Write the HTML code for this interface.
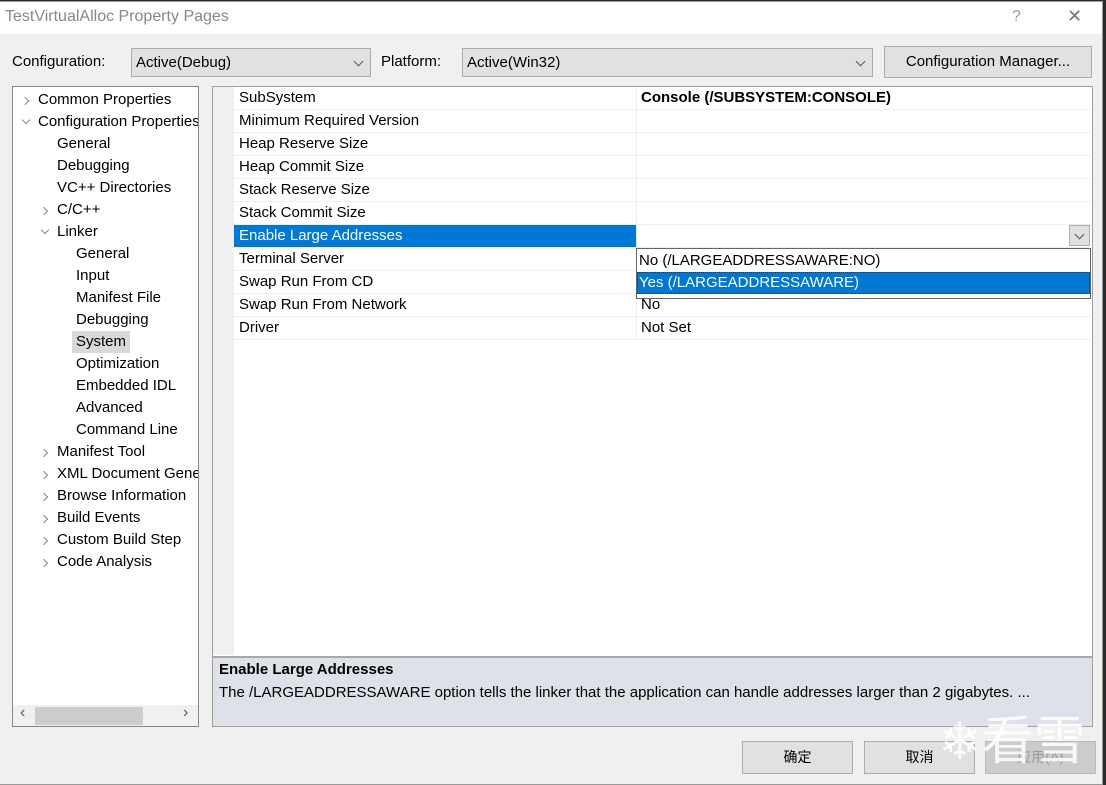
<!DOCTYPE html>
<html><head><style>
*{margin:0;padding:0;box-sizing:border-box}
body{width:1106px;height:785px;background:#2b2b2b;position:relative;overflow:hidden;font-family:"Liberation Sans","Noto Sans CJK SC",sans-serif;font-size:15px;color:#000}
.a{position:absolute;white-space:nowrap}
#win{position:absolute;left:-1px;top:1px;width:1104px;height:784px;background:#f0f0f0;border:1px solid #999}
.t{position:absolute;white-space:nowrap;line-height:22px}
.cb{position:absolute;background:#e1e1e1;border:1px solid #adadad;height:29px;line-height:27px;padding-left:4px}
.chev{position:absolute;right:8px;top:9px;width:7px;height:7px;border-right:1px solid #555;border-bottom:1px solid #555;transform:rotate(45deg)}
.arr{position:absolute;width:6px;height:6px;border-right:1.3px solid #888;border-bottom:1.3px solid #888}
.r{position:absolute;left:234px;width:857px;height:23px;border-bottom:1px solid #f0f0f0}
.r span{position:absolute;left:5px;top:0;line-height:22px}
.r b{position:absolute;left:407px;top:0;line-height:22px}
.btn{position:absolute;top:739px;width:111px;height:33px;background:#e1e1e1;border:1px solid #adadad;text-align:center;line-height:31px;font-size:14px}
</style></head><body>
<div id="win">
<div class="a" style="left:0;top:0;width:1102px;height:32px;background:#fff"></div>
<div class="a" style="left:5px;top:6px;font-size:16px;color:#888">TestVirtualAlloc Property Pages</div>
<div class="a" style="left:1012px;top:6px;font-size:16px;color:#999">?</div>
<div class="a" style="left:1067px;top:4px;font-size:18px;color:#777">✕</div>

<div class="a" style="left:12px;top:51px">Configuration:</div>
<div class="cb" style="left:131px;top:46px;width:240px">Active(Debug)<div class="chev"></div></div>
<div class="a" style="left:381px;top:51px">Platform:</div>
<div class="cb" style="left:462px;top:46px;width:411px">Active(Win32)<div class="chev"></div></div>
<div class="cb" style="left:884px;top:44px;width:208px;height:32px;line-height:30px;text-align:center;padding:0">Configuration Manager...</div>

<!-- tree -->
<div class="a" style="left:12px;top:84px;width:187px;height:641px;background:#fff;border:1px solid #828790;overflow:hidden">
<div class="arr" style="left:9px;top:11px;transform:rotate(-45deg)"></div>
<div class="t" style="left:25px;top:2px">Common Properties</div>
<div class="arr" style="left:10px;top:30px;transform:rotate(45deg)"></div>
<div class="t" style="left:25px;top:24px">Configuration Properties</div>
<div class="t" style="left:44px;top:46px">General</div>
<div class="t" style="left:44px;top:68px">Debugging</div>
<div class="t" style="left:44px;top:90px">VC++ Directories</div>
<div class="arr" style="left:28px;top:121px;transform:rotate(-45deg)"></div>
<div class="t" style="left:44px;top:112px">C/C++</div>
<div class="arr" style="left:29px;top:140px;transform:rotate(45deg)"></div>
<div class="t" style="left:44px;top:134px">Linker</div>
<div class="t" style="left:63px;top:156px">General</div>
<div class="t" style="left:63px;top:178px">Input</div>
<div class="t" style="left:63px;top:200px">Manifest File</div>
<div class="t" style="left:63px;top:222px">Debugging</div>
<div class="t" style="left:59px;top:244px;background:#d9d9d9;padding:0 4px">System</div>
<div class="t" style="left:63px;top:266px">Optimization</div>
<div class="t" style="left:63px;top:288px">Embedded IDL</div>
<div class="t" style="left:63px;top:310px">Advanced</div>
<div class="t" style="left:63px;top:332px">Command Line</div>
<div class="arr" style="left:28px;top:363px;transform:rotate(-45deg)"></div><div class="t" style="left:44px;top:354px">Manifest Tool</div>
<div class="arr" style="left:28px;top:385px;transform:rotate(-45deg)"></div><div class="t" style="left:44px;top:376px">XML Document Generator</div>
<div class="arr" style="left:28px;top:407px;transform:rotate(-45deg)"></div><div class="t" style="left:44px;top:398px">Browse Information</div>
<div class="arr" style="left:28px;top:429px;transform:rotate(-45deg)"></div><div class="t" style="left:44px;top:420px">Build Events</div>
<div class="arr" style="left:28px;top:451px;transform:rotate(-45deg)"></div><div class="t" style="left:44px;top:442px">Custom Build Step</div>
<div class="arr" style="left:28px;top:473px;transform:rotate(-45deg)"></div><div class="t" style="left:44px;top:464px">Code Analysis</div>
<div class="a" style="left:0;top:618px;width:185px;height:21px;background:#f0f0f0"></div>
<div class="a" style="left:22px;top:620px;width:108px;height:18px;background:#cdcdcd"></div>
<div class="a" style="left:7px;top:617px;color:#555;font-size:16px">‹</div>
<div class="a" style="left:170px;top:617px;color:#555;font-size:16px">›</div>
</div>

<!-- grid -->
<div class="a" style="left:212px;top:84px;width:881px;height:570px;background:#fff;border:1px solid #a0a0a0;border-bottom:none"></div>
<div class="a" style="left:213px;top:85px;width:21px;height:568px;background:#f0f0f0"></div>
<div class="a" style="left:636px;top:85px;width:1px;height:253px;background:#f0f0f0"></div>
<div class="r" style="top:85px"><span>SubSystem</span><b>Console (/SUBSYSTEM:CONSOLE)</b></div>
<div class="r" style="top:108px"><span>Minimum Required Version</span></div>
<div class="r" style="top:131px"><span>Heap Reserve Size</span></div>
<div class="r" style="top:154px"><span>Heap Commit Size</span></div>
<div class="r" style="top:177px"><span>Stack Reserve Size</span></div>
<div class="r" style="top:200px"><span>Stack Commit Size</span></div>
<div class="r" style="top:223px"><div class="a" style="left:0;top:0;width:402px;height:22px;background:#0078d7"></div><span style="color:#fff">Enable Large Addresses</span></div>
<div class="r" style="top:246px"><span>Terminal Server</span></div>
<div class="r" style="top:269px"><span>Swap Run From CD</span></div>
<div class="r" style="top:292px"><span>Swap Run From Network</span><b style="font-weight:normal">No</b></div>
<div class="r" style="top:315px"><span>Driver</span><b style="font-weight:normal">Not Set</b></div>
<div class="a" style="left:1069px;top:223px;width:21px;height:21px;background:#e1e1e1;border:1px solid #adadad"><div class="chev" style="right:6px;top:5px"></div></div>
<!-- dropdown -->
<div class="a" style="left:636px;top:246px;width:455px;height:51px;background:#fff;border:1px solid #646464">
<div class="t" style="left:2px;top:1px">No (/LARGEADDRESSAWARE:NO)</div>
<div class="a" style="left:0;top:23px;width:453px;height:22px;background:#0078d7;border:1px dotted #333"></div>
<div class="t" style="left:2px;top:23px;color:#fff">Yes (/LARGEADDRESSAWARE)</div>
</div>

<!-- description -->
<div class="a" style="left:212px;top:654px;width:881px;height:71px;background:#dfe1e8;border:1px solid #a0a0a0;border-top:2px solid #a8a8a8"></div>
<div class="a" style="left:219px;top:659px;font-weight:bold">Enable Large Addresses</div>
<div class="a" style="left:219px;top:682px">The /LARGEADDRESSAWARE option tells the linker that the application can handle addresses larger than 2 gigabytes. ...</div>

<div class="btn" style="left:742px">确定</div>
<div class="btn" style="left:864px">取消</div>
<div class="btn" style="left:985px;color:#999;background:#ccc;border-color:#bbb">应用(A)</div>
<div class="a" style="left:938px;top:700px;font-size:52px;color:rgba(255,255,255,0.85);font-family:'Noto Sans CJK SC',sans-serif;line-height:70px">❄看雪</div>
</div>
</body></html>
